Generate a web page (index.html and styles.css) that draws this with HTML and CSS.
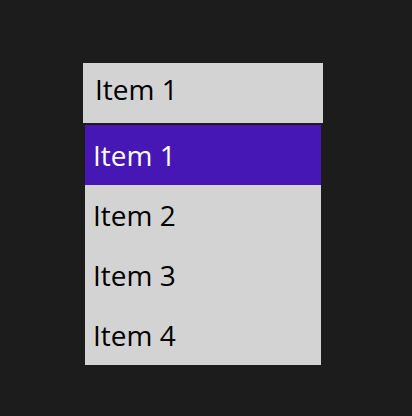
FILE: index.html
```html
<!DOCTYPE html>
<html>
<head>
<meta charset="utf-8">
<link rel="stylesheet" href="styles.css">
</head>
<body>
<div class="combo">
  <div class="combo-box">Item 1</div>
  <ul class="combo-list">
    <li class="combo-item selected">Item 1</li>
    <li class="combo-item">Item 2</li>
    <li class="combo-item">Item 3</li>
    <li class="combo-item">Item 4</li>
  </ul>
</div>
</body>
</html>
```
FILE: styles.css
```css
html, body {
  margin: 0;
  padding: 0;
  background: #1c1c1c;
  height: 100%;
}
body {
  font-family: "Open Sans", "Noto Sans", sans-serif;
  font-size: 28px;
}
.combo {
  padding: 63px 0 0 83px;
  display: flex;
  flex-direction: column;
  gap: 2px;
  width: 240px;
}
.combo-box {
  height: 60px;
  box-sizing: border-box;
  background: #d3d3d3;
  color: #000;
  padding-left: 12px;
  display: flex;
  align-items: center;
  padding-bottom: 8px;
}
.combo-list {
  list-style: none;
  margin: 0 0 0 2px;
  padding: 0;
  width: 236px;
  background: #d3d3d3;
}
.combo-item {
  height: 60px;
  box-sizing: border-box;
  padding-left: 8px;
  display: flex;
  align-items: center;
  color: #000;
}
.combo-item.selected {
  background: #4617b4;
  color: #fff;
}
```
